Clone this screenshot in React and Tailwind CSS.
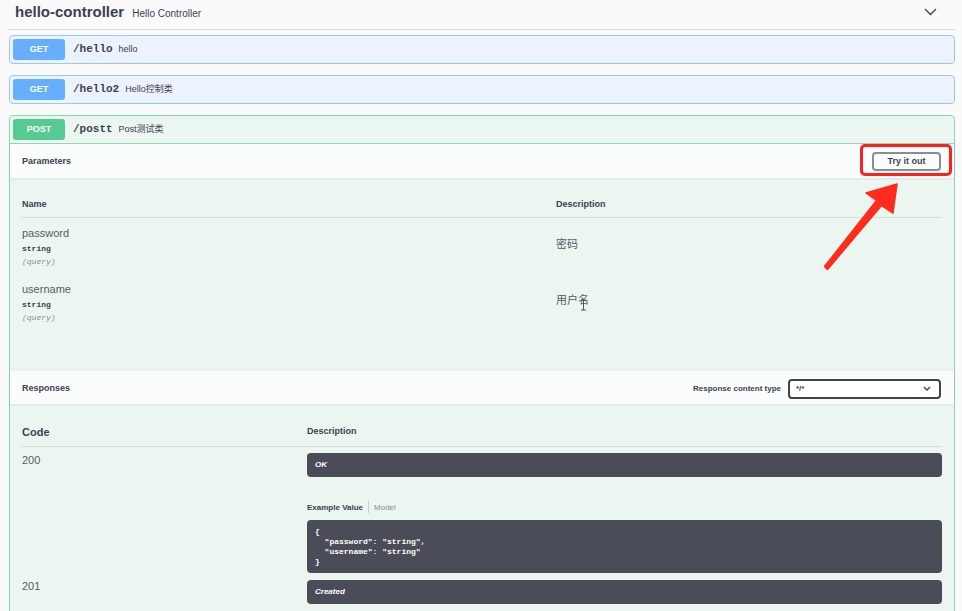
import React from "react";

const GetRow = ({ path, summary }) => (
  <div className="ml-[9px] mr-[7px] flex items-center rounded-[4px] border border-[#98c8f7] bg-[#ecf3fc] p-[3px]">
    <span className="flex h-[21px] w-[52px] items-center justify-center rounded-[3px] bg-[#66affc] text-[9px] font-bold text-white">
      GET
    </span>
    <span className="ml-[8px] font-['Liberation_Mono',monospace] text-[11px] font-bold text-[#3b4151]">
      {path}
    </span>
    <span className="ml-[6px] text-[9px] text-[#3b4151]">{summary}</span>
  </div>
);

const Param = ({ name, desc }) => (
  <div className="grid grid-cols-[534px_1fr] pt-[8px] pb-[7px]">
    <div className="flex flex-col">
      <span className="text-[11px] leading-[14px] text-[#555b67]">{name}</span>
      <span className="mt-[3px] font-['Liberation_Mono',monospace] text-[8px] font-bold leading-[11px] text-[#3b4151]">
        string
      </span>
      <span className="mt-[2px] font-['Liberation_Mono',monospace] text-[8px] italic leading-[11px] text-[#8a8f99]">
        (query)
      </span>
    </div>
    <div className="pt-[11px] text-[11px] leading-[14px] text-[#555b67]">{desc}</div>
  </div>
);

const DarkBox = ({ children, className = "" }) => (
  <div className={`rounded-[4px] bg-[#4a4d57] px-[8px] text-white ${className}`}>{children}</div>
);

export default function App() {
  return (
    <div className="relative h-[611px] w-full overflow-hidden bg-[#fafafa] font-['Liberation_Sans','Noto_Sans_CJK_SC',sans-serif] text-[#3b4151]">
      {/* tag header */}
      <div className="ml-[9px] mr-[7px] flex h-[30px] items-center justify-between border-b border-[#d9dbde] pb-[5px] pl-[6px] pr-[18px]">
        <div className="flex items-baseline">
          <span className="text-[15px] font-bold text-[#3b4151]">hello-controller</span>
          <span className="ml-[8px] text-[10px] text-[#3b4151]">Hello Controller</span>
        </div>
        <svg width="13" height="8" viewBox="0 0 13 8" fill="none" stroke="#3b4151" strokeWidth="1.3">
          <polyline points="1,1 6.5,6.5 12,1" />
        </svg>
      </div>

      <div className="mt-[5px]">
        <GetRow path="/hello" summary="hello" />
      </div>
      <div className="mt-[11px]">
        <GetRow path="/hello2" summary="Hello控制类" />
      </div>

      {/* POST operation */}
      <div className="ml-[9px] mr-[7px] mt-[11px] rounded-t-[4px] border border-[#86d8b2] bg-[#ebf6f1]">
        <div className="flex items-center border-b border-[#8fdab8] p-[3px]">
          <span className="flex h-[21px] w-[52px] items-center justify-center rounded-[3px] bg-[#57c993] text-[9px] font-bold text-white">
            POST
          </span>
          <span className="ml-[8px] font-['Liberation_Mono',monospace] text-[11px] font-bold text-[#3b4151]">
            /postt
          </span>
          <span className="ml-[6px] text-[9px] text-[#3b4151]">Post测试类</span>
        </div>

        {/* parameters */}
        <div className="flex h-[34px] items-center justify-between bg-[#fbfdfc] pl-[12px] pr-[13px] pt-px shadow-[0_1px_2px_rgba(0,0,0,0.08)]">
          <span className="text-[9px] font-bold">Parameters</span>
          <button className="h-[19px] w-[69px] rounded-[4px] border-2 border-[#8a8d93] bg-transparent text-[9px] font-bold text-[#3b4151]">
            Try it out
          </button>
        </div>
        <div className="h-[193px] px-[12px] pt-[20px]">
          <div className="grid grid-cols-[534px_1fr] border-b border-[#cfe3da] pb-[7px] text-[9px] font-bold leading-[12px] text-[#3b4151]">
            <span>Name</span>
            <span>Description</span>
          </div>
          <Param name="password" desc="密码" />
          <Param name="username" desc="用户名" />
        </div>

        {/* responses */}
        <div className="flex h-[33px] items-center justify-between bg-[#fbfdfc] pl-[12px] pr-[13px] pt-[2px] shadow-[0_1px_2px_rgba(0,0,0,0.08)]">
          <span className="text-[9px] font-bold">Responses</span>
          <div className="flex items-center">
            <span className="text-[8px] font-bold">Response content type</span>
            <div className="ml-[7px] flex h-[20px] w-[153px] items-center justify-between rounded-[4px] border-2 border-[#41444e] bg-white pl-[6px] pr-[8px]">
              <span className="text-[8px] font-bold">*/*</span>
              <svg width="8" height="5" viewBox="0 0 8 5" fill="none" stroke="#3b4151" strokeWidth="1.4">
                <polyline points="1,1 4,4 7,1" />
              </svg>
            </div>
          </div>
        </div>
        <div className="px-[12px] pt-[21px] pb-[30px]">
          <div className="grid grid-cols-[285px_1fr] items-center border-b border-[#cfe3da] pb-[7px]">
            <span className="text-[11px] font-bold leading-[14px]">Code</span>
            <span className="text-[9px] font-bold">Description</span>
          </div>
          <div className="grid grid-cols-[285px_1fr] pt-[6px]">
            <span className="text-[11px] leading-[14px] text-[#555b67]">200</span>
            <div className="flex flex-col">
              <DarkBox className="flex h-[24px] items-center text-[8px] font-bold italic">OK</DarkBox>
              <div className="mt-[24px] flex items-center text-[8px] leading-[11px]">
                <span className="font-bold">Example Value</span>
                <span className="mx-[5px] h-[12px] w-px bg-[#c9ccd1]" />
                <span className="text-[#8a8f99]">Model</span>
              </div>
              <DarkBox className="mt-[7px] pt-[7px] pb-[6px] font-['Liberation_Mono',monospace] text-[8px] font-bold leading-[10px] whitespace-pre">
                {'{\n  "password": "string",\n  "username": "string"\n}'}
              </DarkBox>
            </div>
          </div>
          <div className="grid grid-cols-[285px_1fr] pt-[7px]">
            <span className="-mt-px text-[11px] leading-[14px] text-[#555b67]">201</span>
            <DarkBox className="flex h-[24px] items-center text-[8px] font-bold italic">Created</DarkBox>
          </div>
        </div>
      </div>

      {/* annotation: red box around Try it out */}
      <div className="pointer-events-none absolute left-[860px] top-[144px] h-[32px] w-[92px] rounded-[5px] border-[3px] border-[#ff1f1f]" />
      <svg
        className="pointer-events-none absolute left-0 top-0"
        width="962"
        height="611"
        viewBox="0 0 962 611"
      >
        <polygon
          points="897,184 866,193 876.5,200.5 824.5,266.5 827.5,269.5 881.5,205.5 893,213"
          fill="#ff2b1c"
          stroke="#ff2b1c"
          strokeWidth="1.5"
          strokeLinejoin="round"
        />
        {/* text cursor */}
        <g stroke="#3b4151" strokeWidth="0.9" fill="none">
          <line x1="583.5" y1="300" x2="583.5" y2="310" />
          <line x1="581" y1="300" x2="586" y2="300" />
          <line x1="581" y1="310" x2="586" y2="310" />
        </g>
      </svg>
    </div>
  );
}
